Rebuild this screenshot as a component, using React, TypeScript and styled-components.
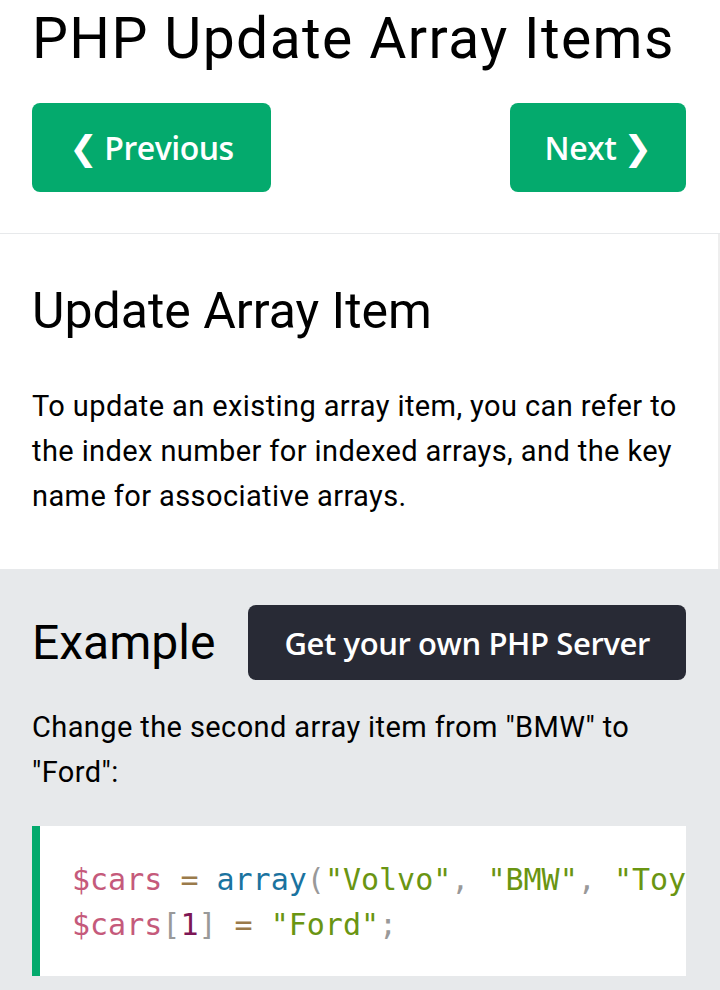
import React from 'react';
import styled, { createGlobalStyle } from 'styled-components';

const Global = createGlobalStyle`
  html, body { margin: 0; padding: 0; background: #ffffff; }
  body { font-family: Roboto, "Noto Sans", Arial, sans-serif; color: #000000; }
  * { box-sizing: border-box; }
`;

const Page = styled.div`
  width: 720px;
  min-height: 990px;
  display: flex;
  flex-direction: column;
`;

const Header = styled.header`
  padding: 6px 34px 41px 32px;
  border-bottom: 1px solid #e7e9eb;
`;

const Title = styled.h1`
  margin: 0;
  font-size: 57px;
  font-weight: 400;
  line-height: 66px;
  letter-spacing: 1.4px;
  white-space: nowrap;
`;

const NavRow = styled.nav`
  display: flex;
  justify-content: space-between;
  margin-top: 31px;
`;

const NavButton = styled.a<{ $w: number }>`
  display: flex;
  align-items: center;
  justify-content: center;
  gap: 7px;
  width: ${(p) => p.$w}px;
  height: 89px;
  background: #04aa6d;
  color: #ffffff;
  border-radius: 8px;
  font-family: "Open Sans", "Noto Sans", sans-serif;
  font-weight: 600;
  font-size: 32px;
  text-decoration: none;
  letter-spacing: -0.5px;
`;

const Chevron = styled.span`
  font-family: "DejaVu Sans", sans-serif;
  font-weight: 700;
  font-size: 34px;
  line-height: 1;
`;

const Section = styled.section<{ $grey?: boolean }>`
  padding: ${(p) => (p.$grey ? '36px 34px 13px 32px' : '48px 34px 50px 32px')};
  background: ${(p) => (p.$grey ? '#e7e9eb' : '#ffffff')};
  border-right: ${(p) => (p.$grey ? 'none' : '2px solid #eeeeee')};
  flex: ${(p) => (p.$grey ? '1' : 'none')};
`;

const Heading = styled.h2<{ $size: number }>`
  margin: 0;
  font-size: ${(p) => p.$size}px;
  font-weight: 400;
  line-height: 58px;
`;

const Para = styled.p<{ $top: number }>`
  margin: ${(p) => p.$top}px 0 0 0;
  font-size: 29px;
  line-height: 45px;
  letter-spacing: 0.4px;
`;

const ExampleRow = styled.div`
  display: flex;
  align-items: center;
  height: 75px;
`;

const ServerButton = styled.a`
  margin-left: auto;
  height: 75px;
  display: flex;
  align-items: center;
  padding: 0 36px;
  background: #282a35;
  color: #ffffff;
  border-radius: 8px;
  font-family: "Open Sans", "Noto Sans", sans-serif;
  font-weight: 600;
  font-size: 31px;
  letter-spacing: -0.4px;
  text-decoration: none;
  white-space: nowrap;
`;

const CodeBox = styled.pre`
  margin: 31px 0 0 0;
  height: 150px;
  padding: 31px 0 29px 32px;
  background: #ffffff;
  border-left: 8px solid #04aa6d;
  font-family: "DejaVu Sans Mono", "Liberation Mono", monospace;
  font-size: 30px;
  line-height: 45px;
  white-space: pre;
  overflow: hidden;
  color: #000000;
`;

const Tok = styled.span<{ $c: string }>`
  color: ${(p) => p.$c};
`;

const C = {
  variable: '#c55a7b',
  operator: '#9a7a4a',
  keyword: '#1a73a0',
  punct: '#999999',
  string: '#6a9512',
  number: '#7d1655',
};

export default function App() {
  return (
    <Page>
      <Global />
      <Header>
        <Title>PHP Update Array Items</Title>
        <NavRow>
          <NavButton $w={239} href="#">
            <Chevron>❮</Chevron>Previous
          </NavButton>
          <NavButton $w={176} href="#">
            Next<Chevron>❯</Chevron>
          </NavButton>
        </NavRow>
      </Header>
      <Section>
        <Heading $size={50}>Update Array Item</Heading>
        <Para $top={44}>
          To update an existing array item, you can refer to the index number for indexed arrays, and the key name for
          associative arrays.
        </Para>
      </Section>
      <Section $grey>
        <ExampleRow>
          <Heading $size={48}>Example</Heading>
          <ServerButton href="#">Get your own PHP Server</ServerButton>
        </ExampleRow>
        <Para $top={25}>Change the second array item from "BMW" to "Ford":</Para>
        <CodeBox>
          <Tok $c={C.variable}>$cars</Tok> <Tok $c={C.operator}>=</Tok> <Tok $c={C.keyword}>array</Tok>
          <Tok $c={C.punct}>(</Tok>
          <Tok $c={C.string}>"Volvo"</Tok>
          <Tok $c={C.punct}>,</Tok> <Tok $c={C.string}>"BMW"</Tok>
          <Tok $c={C.punct}>,</Tok> <Tok $c={C.string}>"Toyota"</Tok>
          <Tok $c={C.punct}>);</Tok>
          {'\n'}
          <Tok $c={C.variable}>$cars</Tok>
          <Tok $c={C.punct}>[</Tok>
          <Tok $c={C.number}>1</Tok>
          <Tok $c={C.punct}>]</Tok> <Tok $c={C.operator}>=</Tok> <Tok $c={C.string}>"Ford"</Tok>
          <Tok $c={C.punct}>;</Tok>
        </CodeBox>
      </Section>
    </Page>
  );
}
